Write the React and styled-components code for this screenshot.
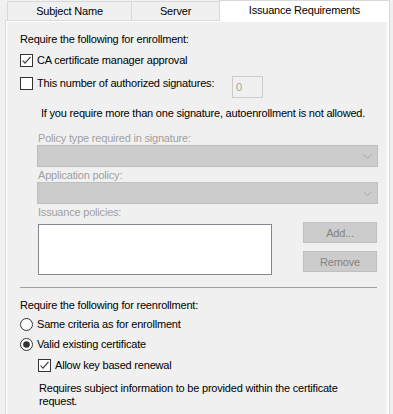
import React from 'react';
import styled, {createGlobalStyle} from 'styled-components';

const GlobalStyle = createGlobalStyle`
  html, body {
    margin: 0;
    background: #f0f0f0;
  }
  body {
    font-family: 'Liberation Sans', Arial, sans-serif;
    font-size: 11px;
    letter-spacing: -0.2px;
    color: #000;
  }
`;

const tabs = [
  {label: 'Subject Name', width: 124},
  {label: 'Server', width: 88},
  {label: 'Issuance Requirements', width: 171, active: true},
];

const CheckBox = ({checked}) => (
  <svg width="13" height="13" viewBox="0 0 13 13">
    <rect x="0.5" y="0.5" width="12" height="12" fill="#fff" stroke="#333" />
    {checked && (
      <polyline
        points="2.5,6.5 5,9.2 10.5,2.8"
        fill="none"
        stroke="#333"
        strokeWidth="1.1"
      />
    )}
  </svg>
);

const Radio = ({checked}) => (
  <svg width="13" height="13" viewBox="0 0 13 13">
    <circle cx="6.5" cy="6.5" r="6" fill="#fff" stroke="#333" />
    {checked && <circle cx="6.5" cy="6.5" r="3.3" fill="#333" />}
  </svg>
);

const Chevron = () => (
  <svg width="9" height="5" viewBox="0 0 9 5">
    <polyline points="0.5,0.5 4.5,4.5 8.5,0.5" fill="none" stroke="#a8a8a8" />
  </svg>
);

const App = () => {
  return (
    <>
      <GlobalStyle />
      <Page>
        <TabBar>
          {tabs.map(tab => (
            <Tab key={tab.label} $active={tab.active} style={{width: tab.width}}>
              {tab.label}
            </Tab>
          ))}
        </TabBar>
        <Panel>
          <Heading $mt={0}>Require the following for enrollment:</Heading>
          <Option $mt={6}>
            <CheckBox checked />
            <span>CA certificate manager approval</span>
          </Option>
          <SignatureRow>
            <Option $mt={0}>
              <CheckBox />
              <span>This number of authorized signatures:</span>
            </Option>
            <NumberBox>0</NumberBox>
          </SignatureRow>
          <Note $indent={21} $mt={8}>
            If you require more than one signature, autoenrollment is not
            allowed.
          </Note>
          <DisabledLabel $mt={11}>Policy type required in signature:</DisabledLabel>
          <Combo>
            <Chevron />
          </Combo>
          <DisabledLabel $mt={2}>Application policy:</DisabledLabel>
          <Combo>
            <Chevron />
          </Combo>
          <DisabledLabel $mt={2}>Issuance policies:</DisabledLabel>
          <PolicyRow>
            <ListBox />
            <ButtonColumn>
              <Button>Add...</Button>
              <Button>Remove</Button>
            </ButtonColumn>
          </PolicyRow>
          <Separator />
          <Heading $mt={10}>Require the following for reenrollment:</Heading>
          <Option $mt={4}>
            <Radio />
            <span>Same criteria as for enrollment</span>
          </Option>
          <Option $mt={5}>
            <Radio checked />
            <span>Valid existing certificate</span>
          </Option>
          <Option $mt={6} $indent={18}>
            <CheckBox checked />
            <span>Allow key based renewal</span>
          </Option>
          <Note $indent={19} $mt={9} $lh={13}>
            Requires subject information to be provided within the certificate
            <br />
            request.
          </Note>
        </Panel>
      </Page>
    </>
  );
};

export default App;

const Page = styled.div`
  width: 393px;
  padding-left: 5px;
  box-sizing: border-box;
`;

const TabBar = styled.div`
  display: flex;
  align-items: flex-end;
  height: 20px;
  padding-left: 2px;
  position: relative;
  z-index: 1;
`;

const Tab = styled.div`
  box-sizing: border-box;
  display: flex;
  align-items: center;
  justify-content: center;
  height: ${({$active}) => ($active ? '21px' : '19px')};
  margin-bottom: ${({$active}) => ($active ? '-1px' : '0')};
  padding-bottom: ${({$active}) => ($active ? '3px' : '0')};
  border: 1px solid #d9d9d9;
  border-bottom: none;
  border-right: ${({$active}) => ($active ? '1px solid #d9d9d9' : 'none')};
  background: ${({$active}) => ($active ? '#fff' : '#f0f0f0')};
  white-space: nowrap;
`;

const Panel = styled.div`
  box-sizing: border-box;
  width: 385px;
  height: 400px;
  border: 1px solid #d9d9d9;
  box-shadow: inset 1px 1px 0 #fff, inset -2px 0 0 #fff;
  background: #f0f0f0;
  padding: 11px 0 0 14px;
`;

const Heading = styled.div`
  line-height: 15px;
  margin-top: ${({$mt}) => $mt}px;
`;

const Option = styled.div`
  display: flex;
  align-items: center;
  gap: 4px;
  height: 15px;
  line-height: 15px;
  margin-top: ${({$mt}) => $mt}px;
  margin-left: ${({$indent}) => $indent || 0}px;
  white-space: nowrap;
`;

const SignatureRow = styled.div`
  display: grid;
  grid-template-columns: 212px 31px;
  align-items: start;
  margin-top: 8px;
  height: 22px;
`;

const NumberBox = styled.div`
  box-sizing: border-box;
  height: 22px;
  border: 1px solid #cccccc;
  background: #f0f0f0;
  color: #a8a39b;
  line-height: 20px;
  padding-left: 3px;
`;

const Note = styled.div`
  line-height: ${({$lh}) => $lh || 15}px;
  margin-top: ${({$mt}) => $mt}px;
  margin-left: ${({$indent}) => $indent}px;
`;

const DisabledLabel = styled.div`
  color: #a0a0a0;
  line-height: 13px;
  margin-left: 18px;
  margin-top: ${({$mt}) => $mt}px;
`;

const Combo = styled.div`
  box-sizing: border-box;
  width: 341px;
  height: 22px;
  margin-left: 17px;
  border: 1px solid #bfbfbf;
  background: #cccccc;
  display: flex;
  align-items: center;
  justify-content: flex-end;
  padding-right: 5px;
`;

const PolicyRow = styled.div`
  display: flex;
  align-items: flex-start;
  margin-top: 3px;
  margin-left: 18px;
`;

const ListBox = styled.div`
  box-sizing: border-box;
  width: 234px;
  height: 51px;
  margin-top: 2px;
  border: 1px solid #828790;
  background: #fff;
`;

const ButtonColumn = styled.div`
  display: flex;
  flex-direction: column;
  gap: 8px;
  margin-left: 31px;
`;

const Button = styled.div`
  box-sizing: border-box;
  width: 74px;
  height: 21px;
  border: 1px solid #bfbfbf;
  background: #cccccc;
  color: #838383;
  display: flex;
  align-items: center;
  justify-content: center;
`;

const Separator = styled.div`
  width: 357px;
  height: 1px;
  margin-top: 12px;
  background: #a0a0a0;
`;
